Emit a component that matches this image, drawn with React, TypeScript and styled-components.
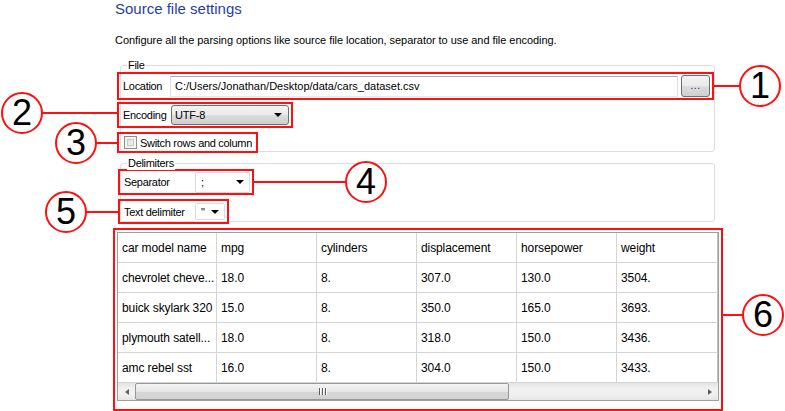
import React from "react";
import styled, { createGlobalStyle } from "styled-components";

const Global = createGlobalStyle`
  html, body { margin: 0; padding: 0; background: #fff; }
  body { font-family: "Liberation Sans", Arial, sans-serif; font-size: 11px; color: #000; }
  * { box-sizing: border-box; }
`;

const Page = styled.div`
  position: relative;
  width: 785px;
  height: 411px;
  overflow: hidden;
  padding-left: 113px;
  display: flex;
  flex-direction: column;
  align-items: flex-start;
`;

const Title = styled.h1`
  margin: 0 0 0 2px;
  font-family: "Liberation Sans", Arial, sans-serif;
  font-weight: normal;
  font-size: 15px;
  line-height: 18px;
  color: #1f3fa6;
`;

const Description = styled.p`
  margin: 15px 0 0 2px;
  font-size: 11px;
  line-height: 14px;
  letter-spacing: -0.05px;
`;

const Group = styled.div<{ $top: number; $h: number; $pt: number; $gap: number }>`
  position: relative;
  margin: ${(p) => p.$top}px 0 0 7px;
  width: 595px;
  height: ${(p) => p.$h}px;
  border: 1px solid #d5dfe5;
  border-radius: 3px;
  padding-top: ${(p) => p.$pt}px;
  display: flex;
  flex-direction: column;
  align-items: flex-start;
  gap: ${(p) => p.$gap}px;
`;

const GroupTitle = styled.span`
  position: absolute;
  top: -8px;
  left: 6px;
  padding: 0 1px;
  background: #fff;
  line-height: 14px;
  letter-spacing: -0.3px;
`;

const RedBox = styled.div<{ $w: number; $h: number; $ml: number; $mt?: number }>`
  width: ${(p) => p.$w}px;
  height: ${(p) => p.$h}px;
  margin-left: ${(p) => p.$ml}px;
  margin-top: ${(p) => p.$mt ?? 0}px;
  border: 2px solid #ff1010;
  display: flex;
  align-items: center;
  padding-left: 2px;
  padding-right: 2px;
  flex-shrink: 0;
`;

const TableBox = styled(RedBox)`
  align-items: flex-start;
  padding: 0;
`;

const Label = styled.span<{ $w: number }>`
  width: ${(p) => p.$w}px;
  flex-shrink: 0;
  padding-left: 2px;
  letter-spacing: -0.3px;
  white-space: nowrap;
`;

const TextInput = styled.div`
  flex: 1;
  height: 21px;
  border: 1px solid #dbdfe6;
  border-top-color: #abadb3;
  border-bottom-color: #e3e9ef;
  display: flex;
  align-items: center;
  padding-left: 4px;
  white-space: nowrap;
  overflow: hidden;
`;

const BrowseButton = styled.div`
  width: 29px;
  height: 22px;
  margin-left: 3px;
  border: 1px solid #707070;
  border-radius: 3px;
  background: linear-gradient(#f2f2f2 0%, #ebebeb 50%, #dddddd 51%, #cfcfcf 100%);
  display: flex;
  align-items: center;
  justify-content: center;
  color: #1a1a80;
  font-size: 10px;
  letter-spacing: 0.5px;
  padding-bottom: 2px;
`;

const Arrow = styled.span`
  width: 0;
  height: 0;
  border-left: 4px solid transparent;
  border-right: 4px solid transparent;
  border-top: 4px solid #000;
  flex-shrink: 0;
`;

const DropCombo = styled.div<{ $w: number; $h: number }>`
  width: ${(p) => p.$w}px;
  height: ${(p) => p.$h}px;
  border: 1px solid #707070;
  border-radius: 3px;
  background: linear-gradient(#f2f2f2 0%, #ebebeb 50%, #dddddd 51%, #cfcfcf 100%);
  display: flex;
  align-items: center;
  justify-content: space-between;
  padding: 0 6px 0 3px;
  letter-spacing: -0.2px;
`;

const EditCombo = styled.div<{ $w: number; $h: number }>`
  width: ${(p) => p.$w}px;
  height: ${(p) => p.$h}px;
  border: 1px solid #d9dde3;
  border-radius: 2px;
  background: #fff;
  display: flex;
  align-items: center;
  justify-content: space-between;
  padding: 0 5px 0 5px;
`;

const CheckBox = styled.span`
  width: 13px;
  height: 13px;
  margin-left: 3px;
  margin-right: 3px;
  border: 1px solid #8e8f8f;
  background: linear-gradient(135deg, #dcdcdc, #f6f6f6);
  box-shadow: inset 0 0 0 2px #f4f4f4, inset 0 0 0 3px #c9c9c9;
  flex-shrink: 0;
`;

const CheckText = styled.span`
  letter-spacing: -0.3px;
  white-space: nowrap;
`;

const Grid = styled.div`
  margin: 2px 0 0 2px;
  width: 602px;
  height: 169px;
  border: 1px solid #a0a0a0;
  display: flex;
  flex-direction: column;
  background: #fff;
`;

const Row = styled.div`
  display: flex;
  height: 30px;
  flex-shrink: 0;
`;

const Cell = styled.div`
  width: 100px;
  height: 30px;
  border-right: 1px solid #d5d5d5;
  border-bottom: 1px solid #d5d5d5;
  display: flex;
  align-items: center;
  padding-left: 4px;
  font-size: 12px;
  letter-spacing: -0.1px;
  white-space: nowrap;
  overflow: hidden;
  &:first-child { width: 99px; }
  &:last-child { width: 101px; border-right-color: #c0c0c0; }
`;

const ScrollBar = styled.div`
  height: 17px;
  flex-shrink: 0;
  display: flex;
  align-items: stretch;
  background: linear-gradient(#e3e3e3, #f0f0f0 30%, #f0f0f0 70%, #e6e6e6);
`;

const ScrollArrow = styled.div<{ $dir: "left" | "right" }>`
  width: 17px;
  display: flex;
  align-items: center;
  justify-content: center;
  &::after {
    content: "";
    width: 0;
    height: 0;
    border-top: 3.5px solid transparent;
    border-bottom: 3.5px solid transparent;
    ${(p) => (p.$dir === "left" ? "border-right: 4px solid #606060;" : "border-left: 4px solid #606060;")}
  }
`;

const Track = styled.div`
  flex: 1;
  display: flex;
  align-items: stretch;
`;

const Thumb = styled.div`
  width: 374px;
  border: 1px solid #979797;
  border-radius: 2px;
  background: linear-gradient(#f4f4f4, #e6e6e6 50%, #d6d6d6 51%, #d2d2d2);
  display: flex;
  align-items: center;
  justify-content: center;
  gap: 2px;
`;

const Grip = styled.span`
  width: 1px;
  height: 7px;
  background: #5d5d5d;
  box-shadow: 1px 0 0 #fff;
`;

const Badge = styled.div`
  position: absolute;
  width: 42px;
  height: 42px;
  border: 2px solid #ff1010;
  border-radius: 50%;
  background: #fff;
  display: flex;
  align-items: center;
  justify-content: center;
  font-family: "Liberation Sans", Arial, sans-serif;
  font-size: 36px;
  line-height: 1;
  color: #000;
`;

const Connector = styled.div`
  position: absolute;
  height: 2px;
  background: #ff1010;
`;

const annotations = [
  { n: 1, cx: 760, cy: 86, x1: 713, x2: 740 },
  { n: 2, cx: 22, cy: 113, x1: 42, x2: 117 },
  { n: 3, cx: 76, cy: 143, x1: 96, x2: 117 },
  { n: 4, cx: 366, cy: 182, x1: 253, x2: 346 },
  { n: 5, cx: 66, cy: 212, x1: 86, x2: 118 },
  { n: 6, cx: 763, cy: 315, x1: 722, x2: 743 },
];

const header = ["car model name", "mpg", "cylinders", "displacement", "horsepower", "weight"];
const rows = [
  ["chevrolet cheve...", "18.0", "8.", "307.0", "130.0", "3504."],
  ["buick skylark 320", "15.0", "8.", "350.0", "165.0", "3693."],
  ["plymouth satell...", "18.0", "8.", "318.0", "150.0", "3436."],
  ["amc rebel sst", "16.0", "8.", "304.0", "150.0", "3433."],
];

export default function App() {
  return (
    <Page>
      <Global />
      <Title>Source file settings</Title>
      <Description>
        Configure all the parsing options like source file location, separator to use and file encoding.
      </Description>

      <Group $top={18} $h={87} $pt={6} $gap={2}>
        <GroupTitle>File</GroupTitle>
        <RedBox $w={597} $h={28} $ml={-4}>
          <Label $w={49}>Location</Label>
          <TextInput>C:/Users/Jonathan/Desktop/data/cars_dataset.csv</TextInput>
          <BrowseButton>...</BrowseButton>
        </RedBox>
        <RedBox $w={176} $h={26} $ml={-4}>
          <Label $w={50}>Encoding</Label>
          <DropCombo $w={119} $h={20}>
            <span>UTF-8</span>
            <Arrow />
          </DropCombo>
        </RedBox>
        <RedBox $w={141} $h={21} $ml={-4} $mt={2}>
          <CheckBox />
          <CheckText>Switch rows and column</CheckText>
        </RedBox>
      </Group>

      <Group $top={11} $h={59} $pt={5} $gap={4}>
        <GroupTitle>Delimiters</GroupTitle>
        <RedBox $w={136} $h={26} $ml={-3}>
          <Label $w={73}>Separator</Label>
          <EditCombo $w={56} $h={21}>
            <span>;</span>
            <Arrow />
          </EditCombo>
        </RedBox>
        <RedBox $w={111} $h={25} $ml={-3}>
          <Label $w={73}>Text delimiter</Label>
          <EditCombo $w={31} $h={17}>
            <span>"</span>
            <Arrow />
          </EditCombo>
        </RedBox>
      </Group>

      <TableBox $w={610} $h={183} $ml={0} $mt={6}>
        <Grid>
          <Row>
            {header.map((h) => (
              <Cell key={h}>{h}</Cell>
            ))}
          </Row>
          {rows.map((r, i) => (
            <Row key={i}>
              {r.map((c, j) => (
                <Cell key={j}>{c}</Cell>
              ))}
            </Row>
          ))}
          <ScrollBar>
            <ScrollArrow $dir="left" />
            <Track>
              <Thumb>
                <Grip />
                <Grip />
                <Grip />
              </Thumb>
            </Track>
            <ScrollArrow $dir="right" />
          </ScrollBar>
        </Grid>
      </TableBox>

      {annotations.map((a) => (
        <React.Fragment key={a.n}>
          <Connector style={{ left: a.x1, top: a.cy - 1, width: a.x2 - a.x1 }} />
          <Badge style={{ left: a.cx - 21, top: a.cy - 21 }}>{a.n}</Badge>
        </React.Fragment>
      ))}
    </Page>
  );
}
